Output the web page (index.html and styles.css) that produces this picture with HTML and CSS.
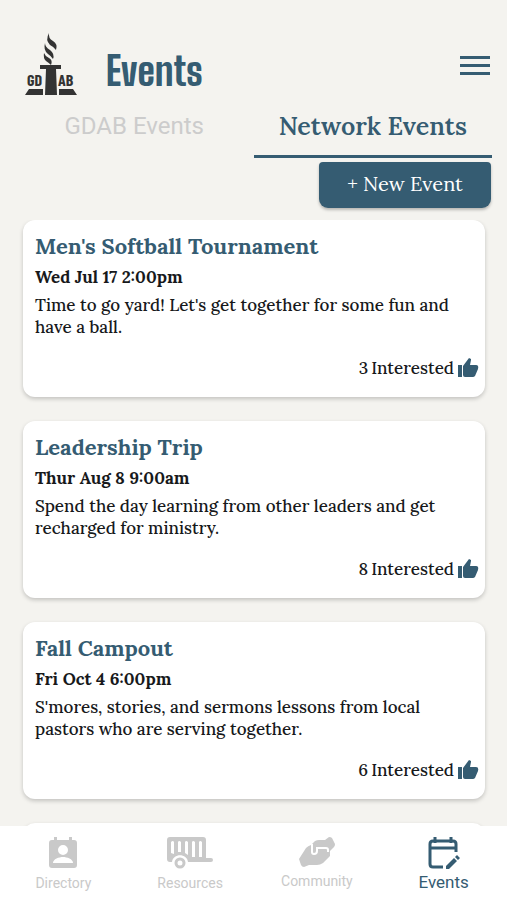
FILE: index.html
```html
<!DOCTYPE html>
<html lang="en">
<head>
  <meta charset="UTF-8">
  <meta name="viewport" content="width=device-width, initial-scale=1">
  <title>Events</title>
  <link rel="stylesheet" href="styles.css">
</head>
<body>

  <header class="header">
    <svg class="logo" viewBox="0 0 52 64" role="img" aria-label="GDAB">
      <path d="M24 0q-1 5 4 8 5 3 3 9-2-3-6-5-5-5-1-12z"/>
      <path d="M20 10q0 4 5 7 5 4 3 9-2-3-5-5-5-4-3-11z"/>
      <path d="M19 20q1 3 5 5 4 2 2 7-2-2-5-4-3-3-2-8z"/>
      <path d="M15 32h21v4h-5l1 26H20l1-26h-6z"/>
      <path d="M4 56h14v6H0zM34 56h14l4 6H34z"/>
      <text x="2" y="53">GD</text>
      <text x="33" y="53">AB</text>
    </svg>
    <h1 class="title">Events</h1>
    <button class="menu" type="button" aria-label="Menu">
      <svg width="30" height="22" viewBox="0 0 30 22"><path d="M0 1h30v3H0zM0 9h30v3H0zM0 17h30v3H0z"/></svg>
    </button>
  </header>

  <div class="tabs" role="tablist">
    <button class="tab" type="button" role="tab" aria-selected="false">GDAB Events</button>
    <button class="tab active" type="button" role="tab" aria-selected="true">Network Events</button>
  </div>

  <div class="actions">
    <button class="new-event" type="button">+ New Event</button>
  </div>

  <main class="events">
    <article class="card">
      <h2>Men's Softball Tournament</h2>
      <p class="date">Wed Jul 17 2:00pm</p>
      <p class="text">Time to go yard! Let's get together for some fun and have a ball.</p>
      <button class="interested" type="button">
        <span>3</span><span>Interested</span>
        <svg class="thumb" viewBox="0 0 22 20"><path d="M1 7h4v12H1zM6 17V8l6-8 2 1v1l-1 5h6q3 0 2 4l-3 7q-1 1-2 1H8q-2 0-2-2z"/></svg>
      </button>
    </article>

    <article class="card">
      <h2>Leadership Trip</h2>
      <p class="date">Thur Aug 8 9:00am</p>
      <p class="text">Spend the day learning from other leaders and get recharged for ministry.</p>
      <button class="interested" type="button">
        <span>8</span><span>Interested</span>
        <svg class="thumb" viewBox="0 0 22 20"><path d="M1 7h4v12H1zM6 17V8l6-8 2 1v1l-1 5h6q3 0 2 4l-3 7q-1 1-2 1H8q-2 0-2-2z"/></svg>
      </button>
    </article>

    <article class="card">
      <h2>Fall Campout</h2>
      <p class="date">Fri Oct 4 6:00pm</p>
      <p class="text">S'mores, stories, and sermons lessons from local pastors who are serving together.</p>
      <button class="interested" type="button">
        <span>6</span><span>Interested</span>
        <svg class="thumb" viewBox="0 0 22 20"><path d="M1 7h4v12H1zM6 17V8l6-8 2 1v1l-1 5h6q3 0 2 4l-3 7q-1 1-2 1H8q-2 0-2-2z"/></svg>
      </button>
    </article>

    <article class="card"></article>
  </main>

  <nav class="bottom-nav">
    <a href="#">
      <svg width="28" height="32" viewBox="0 0 28 32">
        <path fill-rule="evenodd" d="M5 0h3v3h12V0h3v3h2q3 0 3 3v22q0 3-3 3H3q-3 0-3-3V6q0-3 3-3h2zM14 8a5 5 0 1 0 0 10 5 5 0 0 0 0-10zM4 26h20c0-4-6-6-10-6s-10 2-10 6z"/>
      </svg>
      Directory
    </a>
    <a href="#">
      <svg width="46" height="32" viewBox="0 0 46 32">
        <path fill-rule="evenodd" d="M3 0h33q3 0 3 3v18h5q2 0 2 2t-2 2H21c-1-9-15-9-16 0H3q-3 0-3-3V3q0-3 3-3zM4 5v11l3 1V5q-1-2-3 0zM11 5v10h3V5q-2-2-3 0zM18 5v11l3 2V5q-2-2-3 0zM25 5v15h3V5q-2-2-3 0zM32 5v15h3V5q-2-2-3 0z"/>
        <circle class="wheel" cx="13" cy="26" r="4"/>
      </svg>
      Resources
    </a>
    <a href="#">
      <svg width="36" height="30" viewBox="0 0 36 30">
        <path d="M0 22l7-11q2-2 5-3l4-4q2-1 4-1h6l4-3q2 0 3 1l3 6q0 2-1 3l-4 4v5l-7 7q-3 2-6 2h-8l-5 2q-2 0-3-2z"/>
        <path class="gap" d="M13 7v8q0 2 2 2 3 0 3-3v-3h9q2 0 2 2v2"/>
      </svg>
      Community
    </a>
    <a href="#" class="current">
      <svg width="32" height="34" viewBox="0 0 32 34">
        <path class="line" d="M15 30H5q-3 0-3-3V7q0-3 3-3h20q3 0 3 3v8M2 11h26M7 0v6M23 0v6"/>
        <path d="M18 29l8-8 3 3-8 8h-3zM27 20l2-2 3 3-2 2z"/>
      </svg>
      Events
    </a>
  </nav>

</body>
</html>
```
FILE: styles.css
```css
* {
  box-sizing: border-box;
}

body {
  margin: 0;
  height: 100vh;
  display: flex;
  flex-direction: column;
  background: #f4f3ef;
  color: #17191b;
  font-family: Lora, "Liberation Serif", serif;
}

button {
  padding: 0;
  border: none;
  background: none;
  color: inherit;
  font-family: inherit;
  cursor: pointer;
}

.header {
  display: flex;
  align-items: center;
  padding: 33px 17px 0 25px;
}

.logo {
  width: 52px;
  height: 64px;
  fill: #333;
}

.logo text {
  font: bold 16px "Barlow Condensed", "Roboto Condensed", "Liberation Sans Narrow", sans-serif;
}

.title {
  margin: 12px 0 0 29px;
  color: #355c72;
  font: 800 40px/48px "Big Shoulders Display", "Big Shoulders Text", "Liberation Sans Narrow", sans-serif;
}

.menu {
  margin: 2px 0 0 auto;
}

.menu svg {
  display: block;
  fill: #355c72;
}

.tabs {
  display: flex;
  padding: 0 15px;
}

.tab {
  flex: 1;
  height: 61px;
  border-bottom: 3px solid transparent;
  color: #ccc;
  font: 24px Roboto, sans-serif;
}

.tab.active {
  border-color: #355c72;
  color: #355c72;
  font: 600 25px Lora, "Liberation Serif", serif;
}

.actions {
  display: flex;
  justify-content: flex-end;
  padding: 4px 16px 12px;
}

.new-event {
  width: 172px;
  height: 46px;
  padding-bottom: 4px;
  border-radius: 4px 4px 9px 9px;
  background: #355c72;
  color: #fff;
  font-size: 20px;
  box-shadow: 0 2px 3px rgba(0, 0, 0, 0.25);
}

.events {
  flex: 1;
  min-height: 0;
  overflow-y: auto;
  scrollbar-width: none;
  padding: 0 22px 0 23px;
}

.card {
  display: flex;
  flex-direction: column;
  min-height: 177px;
  margin-bottom: 24px;
  padding: 12px 6px 17px 12px;
  border-radius: 12px;
  background: #fff;
  box-shadow: 0 2px 4px rgba(0, 0, 0, 0.2);
}

.card h2 {
  margin: 0;
  color: #355c72;
  font-size: 22px;
  font-weight: 700;
  line-height: 28px;
}

.date {
  margin: 5px 0;
  font-size: 17px;
  font-weight: 700;
  line-height: 24px;
}

.text {
  margin: 0 20px 0 0;
  font-size: 17px;
  font-weight: 500;
  line-height: 22px;
}

.interested {
  display: flex;
  align-items: center;
  align-self: flex-end;
  gap: 3px;
  margin-top: auto;
  font-size: 17px;
  font-weight: 500;
  line-height: 24px;
}

.thumb {
  width: 22px;
  height: 20px;
  fill: #355c72;
}

.bottom-nav {
  display: flex;
  height: 74px;
  background: #fff;
}

.bottom-nav a {
  flex: 1;
  display: flex;
  flex-direction: column;
  align-items: center;
  gap: 4px;
  padding-top: 11px;
  color: #c9c9c9;
  fill: #c9c9c9;
  font: 14px/20px Roboto, sans-serif;
  text-decoration: none;
}

.bottom-nav .wheel {
  fill: none;
  stroke: #c9c9c9;
  stroke-width: 3;
}

.bottom-nav .gap {
  fill: none;
  stroke: #fff;
  stroke-width: 2;
}

.bottom-nav .current {
  gap: 1px;
  color: #355c72;
  fill: #355c72;
  font-size: 17px;
}

.current .line {
  fill: none;
  stroke: #355c72;
  stroke-width: 3;
}
```
